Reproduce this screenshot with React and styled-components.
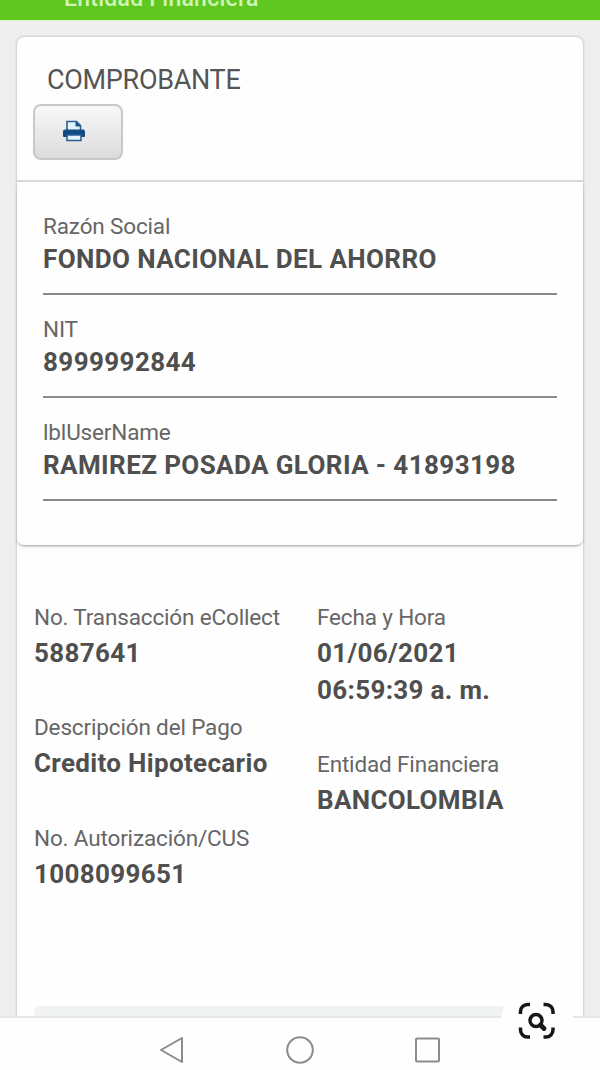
import React from 'react';
import styled, { createGlobalStyle } from 'styled-components';

const GlobalStyle = createGlobalStyle`
* { box-sizing:border-box; }
body {
margin:0;
background-color:#eeeeee;
font-family:Roboto, "Liberation Sans", sans-serif;
}
`;
const Screen = styled.div`
width:600px;
height:1070px;
overflow:hidden;
display:flex;
flex-direction:column;
background-color:#eeeeee;
`;
const Header = styled.div`
flex:none;
height:21px;
padding-left:64px;
display:flex;
align-items:flex-end;
overflow:hidden;
background-color:#60c721;
border-bottom:1px solid #d9f5c9;
`;
const HeaderText = styled.div`
font-size:23px;
font-weight:500;
line-height:28px;
padding-bottom:7px;
letter-spacing:0.25px;
color:#d0f5b8;
`;
const Content = styled.div`
flex:1;
min-height:0;
padding:16px 17px 0;
overflow:hidden;
`;
const Card = styled.div`
height:1100px;
background-color:#fefefe;
border-radius:7px;
box-shadow:0 0 3px rgba(0,0,0,0.28);
`;
const CardTop = styled.div`
height:145px;
padding:26px 16px 0;
border-bottom:2px solid #d8d8d8;
`;
const Title = styled.div`
padding-left:14px;
font-size:27px;
line-height:34px;
letter-spacing:-0.3px;
color:#555555;
`;
const PrintButton = styled.button`
display:flex;
align-items:center;
justify-content:center;
width:90px;
height:56px;
margin-top:7px;
padding:0 9px 3px 0;
border:2px solid #c9c8c8;
border-radius:8px;
background:linear-gradient(#f8f8f8, #dddbdc);
`;
const Panel = styled.div`
height:363px;
padding:28px 26px 0;
background-color:#fefefe;
border-radius:7px;
box-shadow:0 2px 3px -1px rgba(0,0,0,0.4);
`;
const Field = styled.div`
margin-bottom:18px;
padding-bottom:16px;
border-bottom:2px solid #8a8a8a;
`;
const Label = styled.div`
font-size:22.5px;
line-height:${props => props.$height || 35}px;
letter-spacing:-0.15px;
white-space:nowrap;
color:#666666;
`;
const Value = styled.div`
font-size:26px;
font-weight:700;
line-height:${props => props.$height || 37}px;
letter-spacing:${props => props.$spacing || 0.33}px;
white-space:nowrap;
color:#4f4f4f;
`;
const Details = styled.div`
display:grid;
grid-template-columns:283px 1fr;
height:406px;
padding:54.5px 17px 0;
`;
const Column = styled.div`
display:flex;
flex-direction:column;
gap:38.5px;
`;
const Footer = styled.div`
height:60px;
margin:55px 17px 0;
background-color:#f1f3f2;
border-radius:6px;
`;
const NavBar = styled.div`
position:relative;
flex:none;
display:flex;
justify-content:center;
gap:99px;
height:54px;
padding-top:17px;
background-color:#fefefe;
border-top:2px solid #e6e6e6;
`;
const Lens = styled.div`
position:absolute;
top:-33px;
left:500.5px;
display:flex;
align-items:center;
justify-content:center;
width:72px;
height:72px;
border-radius:50%;
background-color:#fefefe;
`;

const fields = [
  { label: 'Razón Social', value: 'FONDO NACIONAL DEL AHORRO' },
  { label: 'NIT', value: '8999992844' },
  { label: 'lblUserName', value: 'RAMIREZ POSADA GLORIA - 41893198' },
];

const left = [
  { label: 'No. Transacción eCollect', lines: ['5887641'] },
  { label: 'Descripción del Pago', lines: ['Credito Hipotecario'] },
  { label: 'No. Autorización/CUS', lines: ['1008099651'] },
];

const right = [
  { label: 'Fecha y Hora', lines: ['01/06/2021', '06:59:39 a. m.'] },
  { label: 'Entidad Financiera', lines: ['BANCOLOMBIA'] },
];

const PrintIcon = () => (
  <svg width="24" height="24" viewBox="0 0 24 24">
    <path d="M5 11V2.500h9.500L18.500 6.500V11" fill="#e3f1fc" stroke="#2c5f91" strokeWidth="1.600" />
    <path d="M13.500 2v5.500H19z" fill="#1c5288" />
    <path d="M3 10.500h18a2 2 0 0 1 2 2V17a1 1 0 0 1-1 1H2a1 1 0 0 1-1-1v-4.500a2 2 0 0 1 2-2z" fill="#124a84" />
    <path d="M5 16h14v5.500H5z" fill="#e3f1fc" stroke="#2c5f91" strokeWidth="1.600" />
  </svg>
);

const LensIcon = () => (
  <svg width="38" height="38" viewBox="0 0 38 38" fill="none" stroke="#171717" strokeWidth="3.500">
    <path d="M2.500 12V9.500a7 7 0 0 1 7-7H12M25.500 2.500H28a7 7 0 0 1 7 7V12M35 25.500V28a7 7 0 0 1-7 7h-2.500M12 35H9.500a7 7 0 0 1-7-7v-2.500" />
    <circle cx="18" cy="18.500" r="6" />
    <path d="M22.500 23l3.500 3.500" strokeWidth="4.800" strokeLinecap="round" />
  </svg>
);

const Group = ({ label, lines }) => (
  <div>
    <Label>{label}</Label>
    {lines.map(line => <Value key={line}>{line}</Value>)}
  </div>
);

const App = () => {
  return (
    <Screen>
      <GlobalStyle />
      <Header><HeaderText>Entidad Financiera</HeaderText></Header>
      <Content>
        <Card>
          <CardTop>
            <Title>COMPROBANTE</Title>
            <PrintButton aria-label="Imprimir"><PrintIcon /></PrintButton>
          </CardTop>
          <Panel>
            {fields.map(f => (
              <Field key={f.label}>
                <Label $height={32}>{f.label}</Label>
                <Value $height={35} $spacing={0.4}>{f.value}</Value>
              </Field>
            ))}
          </Panel>
          <Details>
            <Column>{left.map(g => <Group key={g.label} {...g} />)}</Column>
            <Column>{right.map(g => <Group key={g.label} {...g} />)}</Column>
          </Details>
          <Footer />
        </Card>
      </Content>
      <NavBar>
        <svg width="28" height="30" viewBox="0 0 28 30" fill="none" stroke="#8b8b8b" strokeWidth="2">
          <path d="M24 3v24L3 15z" strokeLinejoin="round" />
        </svg>
        <svg width="30" height="30" viewBox="0 0 30 30" fill="none" stroke="#8b8b8b" strokeWidth="2">
          <circle cx="15" cy="15" r="12.800" />
        </svg>
        <svg width="28" height="30" viewBox="0 0 28 30" fill="none" stroke="#8b8b8b" strokeWidth="2">
          <rect x="2" y="3.500" width="23" height="23" rx="1" />
        </svg>
        <Lens><LensIcon /></Lens>
      </NavBar>
    </Screen>
  );
};
export default App;
